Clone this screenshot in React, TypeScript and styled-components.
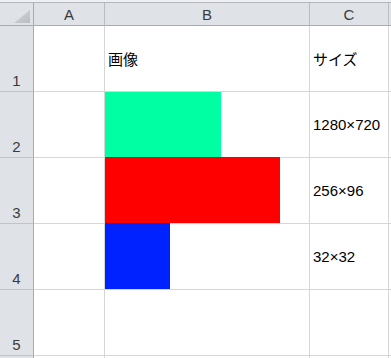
import React from "react";
import styled, { createGlobalStyle } from "styled-components";

const Global = createGlobalStyle`
  html, body { margin: 0; padding: 0; background: #ffffff; }
  * { box-sizing: border-box; }
`;

const Page = styled.div`
  width: 391px;
  height: 358px;
  overflow: hidden;
  font-family: "Liberation Sans", "Noto Sans CJK JP", Arial, sans-serif;
`;

const TopStrip = styled.div`
  height: 3px;
  background: #eef0f3;
  border-bottom: 1px solid #b4b8bd;
`;

const Sheet = styled.div`
  display: grid;
  grid-template-columns: 34px 71px 205px 79px 1fr;
  grid-template-rows: 23px repeat(5, 66px) 8px;
`;

const HeaderBase = styled.div`
  background: #dfe2e7;
  color: #3a3a3a;
  font-size: 15px;
  line-height: 17px;
  display: flex;
`;

const Corner = styled(HeaderBase)`
  border-right: 1px solid #a6abb1;
  border-bottom: 1px solid #a6abb1;
  align-items: flex-end;
  justify-content: flex-end;
  padding: 0 3px 2px 0;
`;

const ColHeader = styled(HeaderBase)`
  border-right: 1px solid #b9bdc2;
  border-bottom: 1px solid #a6abb1;
  align-items: center;
  justify-content: center;
`;

const RowHeader = styled(HeaderBase)`
  border-right: 1px solid #a6abb1;
  border-bottom: 1px solid #c0c4c9;
  align-items: flex-end;
  justify-content: center;
  padding-bottom: 2px;
`;

const Cell = styled.div`
  position: relative;
  background: #ffffff;
  border-right: 1px solid #d6d6d6;
  border-bottom: 1px solid #d6d6d6;
  display: flex;
  align-items: center;
  padding-left: 3px;
  font-size: 15px;
  color: #000000;
  white-space: nowrap;
`;

const Picture = styled.div<{ $color: string; $w: number; $h: number; $top: number }>`
  position: absolute;
  left: 0;
  top: ${(p) => p.$top}px;
  width: ${(p) => p.$w}px;
  height: ${(p) => p.$h}px;
  background: ${(p) => p.$color};
  z-index: 2;
`;

const CornerMark = () => (
  <svg width="16" height="13" viewBox="0 0 16 13">
    <defs>
      <linearGradient id="cg" x1="0" y1="0" x2="1" y2="1">
        <stop offset="0" stopColor="#d4d7db" />
        <stop offset="1" stopColor="#b9bdc2" />
      </linearGradient>
    </defs>
    <polygon points="16,0 16,13 0,13" fill="url(#cg)" />
  </svg>
);

type RowData = {
  n?: number;
  b?: React.ReactNode;
  c?: string;
};

const rows: RowData[] = [
  { n: 1, b: "画像", c: "サイズ" },
  { n: 2, b: <Picture $color="#00ffa2" $w={116} $h={65} $top={0} />, c: "1280×720" },
  { n: 3, b: <Picture $color="#ff0000" $w={175} $h={66} $top={-1} />, c: "256×96" },
  { n: 4, b: <Picture $color="#0022ff" $w={65} $h={66} $top={-1} />, c: "32×32" },
  { n: 5 },
  {},
];

export default function App() {
  return (
    <Page>
      <Global />
      <TopStrip />
      <Sheet>
        <Corner>
          <CornerMark />
        </Corner>
        <ColHeader>A</ColHeader>
        <ColHeader>B</ColHeader>
        <ColHeader>C</ColHeader>
        <ColHeader />
        {rows.map((r, i) => (
          <React.Fragment key={i}>
            <RowHeader>{r.n}</RowHeader>
            <Cell />
            <Cell>{r.b}</Cell>
            <Cell>{r.c}</Cell>
            <Cell />
          </React.Fragment>
        ))}
      </Sheet>
    </Page>
  );
}
